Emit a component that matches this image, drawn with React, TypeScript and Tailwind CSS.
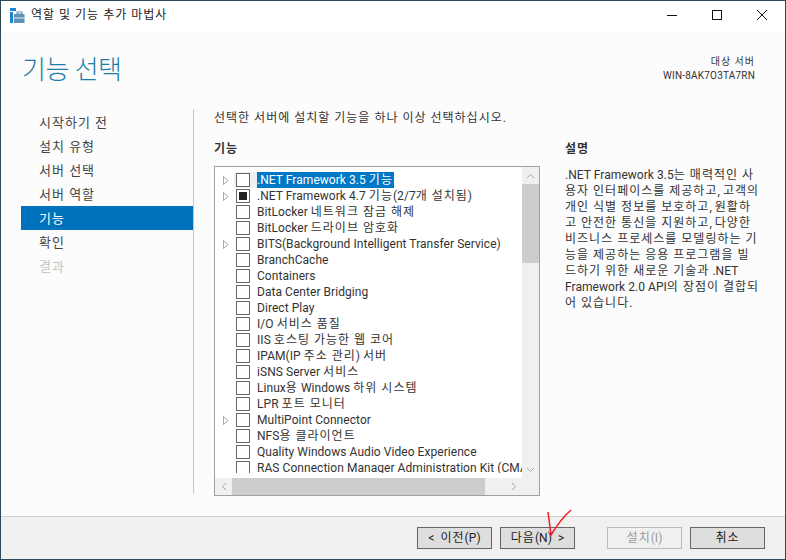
const features = [
  { label: ".NET Framework 3.5 기능", arrow: true, selected: true },
  { label: ".NET Framework 4.7 기능(2/7개 설치됨)", arrow: true, partial: true },
  { label: "BitLocker 네트워크 잠금 해제" },
  { label: "BitLocker 드라이브 암호화" },
  { label: "BITS(Background Intelligent Transfer Service)", arrow: true },
  { label: "BranchCache" },
  { label: "Containers" },
  { label: "Data Center Bridging" },
  { label: "Direct Play" },
  { label: "I/O 서비스 품질" },
  { label: "IIS 호스팅 가능한 웹 코어" },
  { label: "IPAM(IP 주소 관리) 서버" },
  { label: "iSNS Server 서비스" },
  { label: "Linux용 Windows 하위 시스템" },
  { label: "LPR 포트 모니터" },
  { label: "MultiPoint Connector", arrow: true },
  { label: "NFS용 클라이언트" },
  { label: "Quality Windows Audio Video Experience" },
  { label: "RAS Connection Manager Administration Kit (CMAK)" },
];

const steps = ["시작하기 전", "설치 유형", "서버 선택", "서버 역할", "기능", "확인", "결과"];

const description = [
  ".NET Framework 3.5는 매력적인 사",
  "용자 인터페이스를 제공하고, 고객의",
  "개인 식별 정보를 보호하고, 원활하",
  "고 안전한 통신을 지원하고, 다양한",
  "비즈니스 프로세스를 모델링하는 기",
  "능을 제공하는 응용 프로그램을 빌",
  "드하기 위한 새로운 기술과 .NET",
  "Framework 2.0 API의 장점이 결합되",
  "어 있습니다.",
];

// hangul runs get extra spacing, the reference font sets them wider
const Ko = ({ text }: { text: string }) => (
  <>
    {text.split(/([가-힣]+(?: +[가-힣]+)*)/).map((part, i) =>
      i % 2 ? (
        <span key={i} className="tracking-[1px]">
          {part}
        </span>
      ) : (
        part
      )
    )}
  </>
);

const WizardIcon = () => (
  <svg width="15" height="15" viewBox="0 0 15 15">
    <rect x="0" y="0" width="6" height="3" fill="#1a86d0" />
    <rect x="0" y="4" width="3" height="11" fill="#1a86d0" />
    <rect x="4" y="6" width="10.5" height="9" fill="#5b93b8" />
    <rect x="4" y="9.5" width="10.5" height="1" fill="#dfeaf2" />
    <rect x="7" y="4" width="5" height="2" fill="none" stroke="#5b93b8" />
  </svg>
);

const Row = ({ label, arrow, partial, selected }: { label: string; arrow?: boolean; partial?: boolean; selected?: boolean }) => (
  <div className="flex h-4 shrink-0 items-center">
    <div className="flex w-[19px] shrink-0 justify-center pl-[2px]">
      {arrow && (
        <svg width="6" height="9" viewBox="0 0 6 9">
          <path d="M0.5 0.5 L5 4.5 L0.5 8.5 Z" fill="#fff" stroke="#a6a6a6" />
        </svg>
      )}
    </div>
    <div className={`flex h-4 w-[23px] shrink-0 items-center pl-[2px] ${selected ? "bg-[#f0f0f0]" : ""}`}>
      <div className="flex h-[14px] w-[14px] items-center justify-center border border-[#666] bg-white">
        {partial && <div className="h-2 w-2 bg-[#222]" />}
      </div>
    </div>
    <span className={`whitespace-nowrap pr-px leading-4 ${selected ? "bg-[#0078c8] text-white" : ""}`}>
      <Ko text={label} />
    </span>
  </div>
);

const Button = ({ children, disabled, className = "" }: { children: React.ReactNode; disabled?: boolean; className?: string }) => (
  <div className={`flex h-[22px] w-[75px] items-center justify-center border text-[12px] ${disabled ? "border-[#bcbcbc] bg-[#f0f0f0] text-[#9a9a9a]" : "border-[#666] bg-[#dedede] text-[#222]"} ${className}`}>
    {children}
  </div>
);

export default function App() {
  return (
    <div className="relative flex h-[560px] w-[786px] flex-col overflow-hidden border border-[#2b4a5c] bg-[#fcfcfc] text-[12px] tracking-[0.05px] text-[#333] [font-family:Roboto,'Noto_Sans_CJK_KR',sans-serif]">
      <div className="flex h-[30px] shrink-0 items-center bg-white pb-[2px] pl-[9px]">
        <WizardIcon />
        <span className="ml-[6px] text-[12px] text-[#222]">
          <Ko text="역할 및 기능 추가 마법사" />
        </span>
        <div className="ml-auto flex items-center">
          <svg width="12" height="12" viewBox="0 0 12 12" className="mr-[33px]"><path d="M1 6.5 H11" stroke="#111" /></svg>
          <svg width="12" height="12" viewBox="0 0 12 12" className="mr-[33px]"><rect x="1.5" y="1.5" width="9" height="9" fill="none" stroke="#111" /></svg>
          <svg width="12" height="12" viewBox="0 0 12 12" className="mr-[17px]"><path d="M1 1 L11 11 M11 1 L1 11" stroke="#111" /></svg>
        </div>
      </div>

      <div className="flex h-[78px] shrink-0 items-start justify-between pl-[21px] pr-[30px]">
        <h1 className="pt-[19px] text-[26px] font-light leading-[40px] tracking-[-0.5px] text-[#1b7ea8]">기능 선택</h1>
        <div className="pt-[24px] text-right text-[10px] leading-[14px] text-[#333]">
          <div><Ko text="대상 서버" /></div>
          <div className="tracking-[0.2px]">WIN-8AK7O3TA7RN</div>
        </div>
      </div>

      <div className="flex min-h-0 flex-1">
        <nav className="w-[192px] shrink-0 pl-5 pt-[1px] text-[13px]">
          {steps.map((step, i) => (
            <div
              key={step}
              className={`flex h-6 items-center pl-[18px] pt-[2px] ${i === 4 ? "bg-[#0072bc] text-white" : i === 6 ? "text-[#c4c4c4]" : "text-[#444]"}`}
            >
              <Ko text={step} />
            </div>
          ))}
        </nav>

        <div className="h-[385px] w-px shrink-0 bg-[#c8c8c8]" />

        <div className="flex min-w-0 flex-1 flex-col pl-5">
          <p className="h-[30px] leading-[18px]">
            <Ko text="선택한 서버에 설치할 기능을 하나 이상 선택하십시오." />
          </p>
          <div className="flex">
            <div className="w-[326px] shrink-0">
              <div className="h-[27px] pt-px font-bold leading-[18px]">
                <Ko text="기능" />
              </div>
              <div className="flex h-[330px] flex-col border border-[#a0a0a0] bg-white">
                <div className="flex min-h-0 flex-1">
                  <div className="min-w-0 flex-1 py-[5px]">
                    <div className="h-full overflow-hidden">
                      {features.map((f) => (
                        <Row key={f.label} {...f} />
                      ))}
                    </div>
                  </div>
                  <div className="flex w-[17px] shrink-0 flex-col bg-[#f0f0f0]">
                    <div className="flex h-[17px] items-center justify-center">
                      <svg width="9" height="6" viewBox="0 0 9 6"><path d="M1 5 L4.5 1.5 L8 5" fill="none" stroke="#a6a6a6" /></svg>
                    </div>
                    <div className="h-[79px] bg-[#cdcdcd]" />
                    <div className="flex-1" />
                    <div className="flex h-[17px] items-center justify-center">
                      <svg width="9" height="6" viewBox="0 0 9 6"><path d="M1 1 L4.5 4.5 L8 1" fill="none" stroke="#a6a6a6" /></svg>
                    </div>
                  </div>
                </div>
                <div className="flex h-[17px] shrink-0 bg-[#f0f0f0]">
                  <div className="flex w-[17px] items-center justify-center">
                    <svg width="6" height="9" viewBox="0 0 6 9"><path d="M5 1 L1.5 4.5 L5 8" fill="none" stroke="#a6a6a6" /></svg>
                  </div>
                  <div className="w-[253px] bg-[#cdcdcd]" />
                  <div className="flex-1" />
                  <div className="flex w-[17px] items-center justify-center">
                    <svg width="6" height="9" viewBox="0 0 6 9"><path d="M1 1 L4.5 4.5 L1 8" fill="none" stroke="#a6a6a6" /></svg>
                  </div>
                  <div className="w-[17px]" />
                </div>
              </div>
            </div>
            <div className="ml-[25px] w-[200px] shrink-0">
              <div className="h-[28px] pt-px font-bold leading-[18px]">
                <Ko text="설명" />
              </div>
              <div className="leading-[16px]">
                {description.map((line) => (
                  <div key={line} className="whitespace-nowrap">
                    <Ko text={line} />
                  </div>
                ))}
              </div>
            </div>
          </div>
        </div>
      </div>

      <div className="flex h-[43px] shrink-0 items-center border-t border-[#d0d0d0] bg-[#f0f0f0] pl-[416px]">
        <Button><span className="mr-[6px]">&lt;</span><Ko text="이전" />(P)</Button>
        <Button className="ml-[8px]"><Ko text="다음" />(N)<span className="ml-[6px]">&gt;</span></Button>
        <Button disabled className="ml-[32px]"><Ko text="설치" />(I)</Button>
        <Button className="ml-[8px]"><Ko text="취소" /></Button>
      </div>

      <svg className="absolute left-[546px] top-[508px]" width="26" height="34" viewBox="0 0 26 34">
        <path d="M1 3 C2 10 3 18 4 26 C10 16 16 8 24 1" fill="none" stroke="#ee1c25" strokeWidth="1.5" />
      </svg>
    </div>
  );
}
